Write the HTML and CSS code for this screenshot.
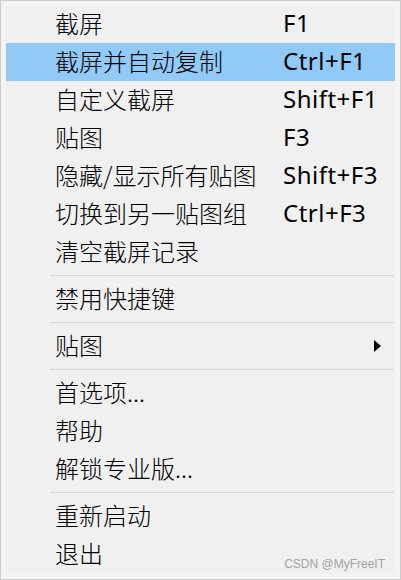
FILE: index.html
```html
<!DOCTYPE html>
<html lang="zh-CN">
<head>
<meta charset="utf-8">
<title>菜单</title>
<link rel="stylesheet" href="styles.css">
</head>
<body>
<div class="menu">
  <div class="item"><span class="label">截屏</span><span class="key">F1</span></div>
  <div class="item active"><span class="label">截屏并自动复制</span><span class="key">Ctrl+F1</span></div>
  <div class="item"><span class="label">自定义截屏</span><span class="key">Shift+F1</span></div>
  <div class="item"><span class="label">贴图</span><span class="key">F3</span></div>
  <div class="item"><span class="label">隐藏/显示所有贴图</span><span class="key">Shift+F3</span></div>
  <div class="item"><span class="label">切换到另一贴图组</span><span class="key">Ctrl+F3</span></div>
  <div class="item"><span class="label">清空截屏记录</span></div>
  <div class="sep"></div>
  <div class="item"><span class="label">禁用快捷键</span></div>
  <div class="sep"></div>
  <div class="item"><span class="label">贴图</span><span class="key"></span><span class="arrow"></span></div>
  <div class="sep"></div>
  <div class="item"><span class="label">首选项...</span></div>
  <div class="item"><span class="label">帮助</span></div>
  <div class="item"><span class="label">解锁专业版...</span></div>
  <div class="sep"></div>
  <div class="item"><span class="label">重新启动</span></div>
  <div class="item"><span class="label">退出</span></div>
  <div class="watermark">CSDN @MyFreeIT</div>
</div>
</body>
</html>
```
FILE: styles.css
```css
html, body {
  margin: 0;
  padding: 0;
  background: #f0f0f0;
}
.menu {
  position: relative;
  box-sizing: border-box;
  width: 401px;
  height: 580px;
  border: 1px solid #cccccc;
  padding: 4px 5px 6px 5px;
  background: #f0f0f0;
  box-shadow: inset 0 0 0 5px #f4f4f4;
  font-family: "Noto Sans", "Noto Sans CJK SC", sans-serif;
  font-size: 24px;
  color: #000;
  display: flex;
  flex-direction: column;
}
.item {
  height: 38px;
  display: grid;
  grid-template-columns: 228px 1fr auto;
  align-items: center;
  padding-left: 49px;
  line-height: 38px;
  white-space: nowrap;
}
.item.active {
  background: #91c9f7;
}
.label {
  font-family: "Noto Sans CJK SC", "Noto Sans", sans-serif;
  font-weight: 300;
}
.key {
  letter-spacing: 0.5px;
}
.label, .key {
  position: relative;
  top: -1px;
}
.arrow {
  width: 0;
  height: 0;
  border-left: 7px solid #000;
  border-top: 6px solid transparent;
  border-bottom: 6px solid transparent;
  margin-right: 14px;
}
.sep {
  height: 9px;
  display: flex;
  align-items: center;
  padding-left: 44px;
  padding-right: 1px;
}
.sep::before {
  content: "";
  flex: 1;
  height: 1px;
  background: #d7d7d7;
}
.watermark {
  position: absolute;
  right: 15px;
  bottom: 8px;
  font-family: "Liberation Sans", Arial, sans-serif;
  font-size: 12px;
  color: #a3a3a3;
  line-height: 14px;
}
```
